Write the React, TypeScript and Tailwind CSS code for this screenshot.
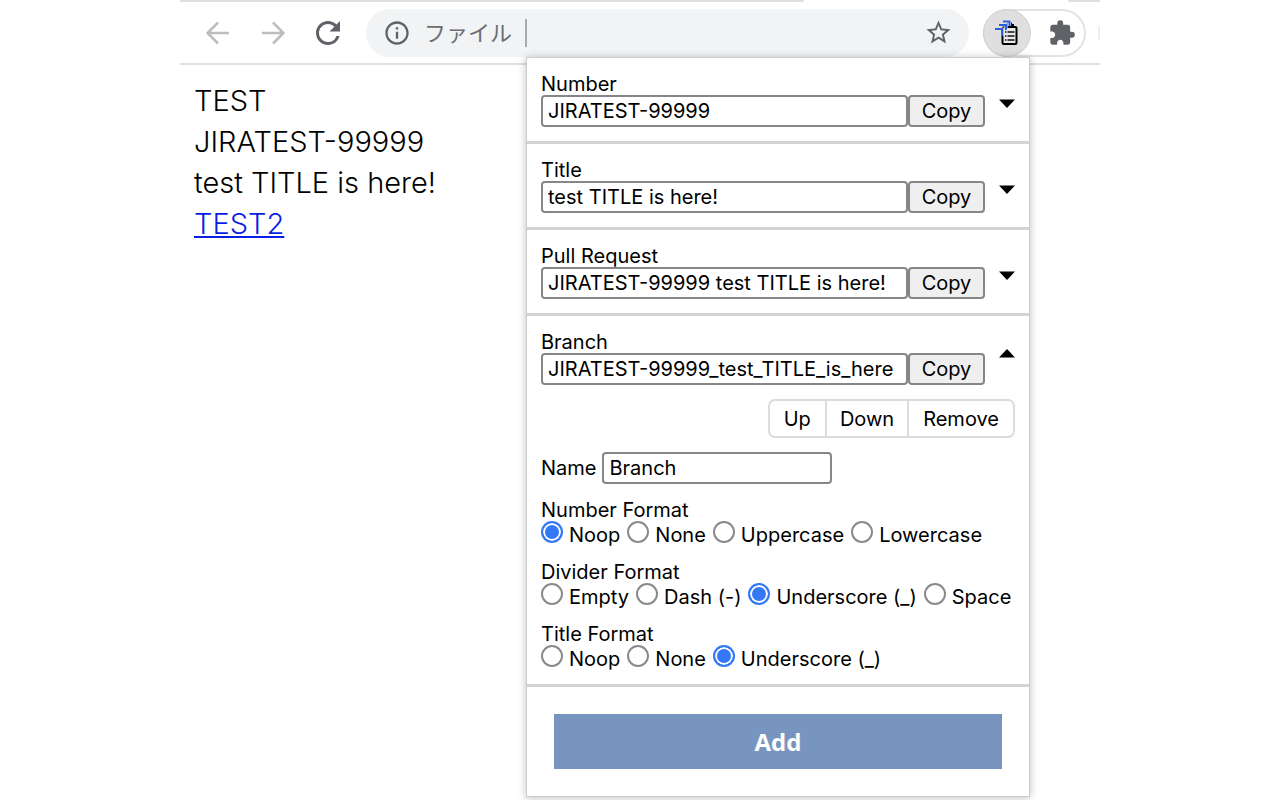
import { useState } from "react";
import { MdExtension, MdInfoOutline, MdRefresh, MdStarBorder } from "react-icons/md";

const fieldClass =
  "h-8 rounded-[4px] border-2 border-[#868686] bg-white px-[5px] text-xl text-black outline-none";

function Arrow({ up }: { up: boolean }) {
  return (
    <svg width="16" height="18" viewBox="0 0 16 18" aria-hidden="true">
      <path d={up ? "M0 8.500h16L8 0z" : "M0 8.500h16L8 17z"} fill="#000" />
    </svg>
  );
}

function FormatRow({ id, label, value }: { id: string; label: string; value: string }) {
  const [open, setOpen] = useState(id === "branch");
  return (
    <div className="flex items-center gap-[14px]">
      <div className="min-w-0 flex-1">
        <label htmlFor={id} className="block pt-[2px] leading-[21px]">
          {label}
        </label>
        <div className="flex">
          <input id={id} type="text" defaultValue={value} className={`${fieldClass} min-w-0 flex-1`} />
          <button type="button" className="h-8 w-[77px] rounded-[4px] border-2 border-[#868686] bg-[#efefef]">
            Copy
          </button>
        </div>
      </div>
      <button type="button" aria-label={`Toggle ${label}`} onClick={() => setOpen(!open)}>
        <Arrow up={open} />
      </button>
    </div>
  );
}

function RadioGroup({ name, legend, options, selected }: { name: string; legend: string; options: string[]; selected: string }) {
  return (
    <fieldset className="mt-[14px]">
      <legend className="pt-[2px] leading-[21px]">{legend}</legend>
      <div className="flex gap-[7px] whitespace-nowrap">
        {options.map((option) => (
          <label key={option} className="flex items-start gap-[6px]">
            <input
              type="radio"
              name={name}
              defaultChecked={option === selected}
              className="size-[22px] shrink-0 appearance-none rounded-full border-2 border-[#8a8a8a] bg-white checked:border-[#3478f6] checked:bg-[#3478f6] checked:shadow-[inset_0_0_0_2px_#fff]"
            />
            <span className="pt-1 leading-[21px]">{option}</span>
          </label>
        ))}
      </div>
    </fieldset>
  );
}

function Popup() {
  const sectionClass = "border-b-[3px] border-[#d3d3d3] p-[14px]";
  return (
    <div className="absolute top-[58px] right-[71px] w-[502px] bg-white font-['Inter',sans-serif] text-xl text-black shadow-[0_0_0_1px_#cccccc,0_1px_8px_1px_rgba(0,0,0,0.25)]">
      <section className={sectionClass}>
        <FormatRow id="number" label="Number" value="JIRATEST-99999" />
      </section>
      <section className={sectionClass}>
        <FormatRow id="title" label="Title" value="test TITLE is here!" />
      </section>
      <section className={sectionClass}>
        <FormatRow id="pull-request" label="Pull Request" value="JIRATEST-99999 test TITLE is here!" />
      </section>
      <section className={sectionClass}>
        <FormatRow id="branch" label="Branch" value="JIRATEST-99999_test_TITLE_is_here" />
        <div className="mt-[14px] flex justify-end">
          <div className="flex h-[39px] divide-x-2 divide-[#dcdcdc] rounded-[7px] border-2 border-[#dcdcdc]">
            <button type="button" className="px-[14px]">Up</button>
            <button type="button" className="px-[13px]">Down</button>
            <button type="button" className="px-[14px]">Remove</button>
          </div>
        </div>
        <div className="mt-[14px] flex items-center gap-[6px]">
          <label htmlFor="format-name">Name</label>
          <input id="format-name" type="text" defaultValue="Branch" className={`${fieldClass} w-[230px]`} />
        </div>
        <RadioGroup name="number-format" legend="Number Format" options={["Noop", "None", "Uppercase", "Lowercase"]} selected="Noop" />
        <RadioGroup name="divider-format" legend="Divider Format" options={["Empty", "Dash (-)", "Underscore (_)", "Space"]} selected="Underscore (_)" />
        <RadioGroup name="title-format" legend="Title Format" options={["Noop", "None", "Underscore (_)"]} selected="Underscore (_)" />
      </section>
      <div className="p-[27px]">
        <button type="button" className="h-[55px] w-full bg-[#7895bf] font-['Open_Sans',sans-serif] text-2xl font-bold text-white">
          Add
        </button>
      </div>
    </div>
  );
}

function ClipboardIcon() {
  return (
    <svg width="24" height="26" viewBox="0 0 24 26" fill="none" aria-hidden="true">
      <rect x="7.500" y="7" width="14" height="17" rx="1.200" fill="#e8e8e8" stroke="#000" strokeWidth="2" />
      <path d="M10.500 6.500V4h2V2.500h4.500V4h2v2.500z" fill="#000" />
      <path d="M10 12h1.500M12.500 12h7M10 16h1.500M12.500 16h7M10 20h1.500M12.500 20h7" stroke="#111" strokeWidth="1.600" />
      <path d="M8 1.500h6.500V6M4 5h7v5M0 9h7v7" stroke="#e8e8e8" strokeWidth="3.200" />
      <path d="M8 1.500h6.500V6M4 5h7v5M0 9h7v7" stroke="#2b5fd9" strokeWidth="2" />
    </svg>
  );
}

function Toolbar() {
  return (
    <header className="border-b-2 border-[#dedee3] bg-white">
      <div className="flex h-[2px] justify-between">
        <div className="w-[624px] rounded-br-sm bg-[#dedee3]" />
        <div className="w-8 rounded-bl-sm bg-[#dedee3]" />
      </div>
      <div className="flex h-[61px] items-center">
        <button type="button" aria-label="Back" className="ml-[26px]">
          <svg width="24" height="24" viewBox="0 0 24 24" fill="none" stroke="#bcbdbf" strokeWidth="2.500">
            <path d="M23 12H2M12 1.500L1.500 12 12 22.500" />
          </svg>
        </button>
        <button type="button" aria-label="Forward" className="ml-[31px]">
          <svg width="24" height="24" viewBox="0 0 24 24" fill="none" stroke="#bcbdbf" strokeWidth="2.500">
            <path d="M1 12h21M12 1.500L22.500 12 12 22.500" />
          </svg>
        </button>
        <button type="button" aria-label="Reload" className="ml-[25px]">
          <MdRefresh size={36} color="#5f6368" />
        </button>
        <div className="ml-5 flex h-12 min-w-0 flex-1 items-center rounded-full bg-[#f1f3f4] pr-4 pl-[17px] text-[#6b6e72]">
          <MdInfoOutline size={28} color="#5f6368" />
          <span className="ml-[13px] pb-[3px] font-['Noto_Sans_CJK_JP',sans-serif] text-[22px] leading-8">ファイル</span>
          <span className="ml-[13px] h-7 w-[2px] bg-[#a9abae]" />
          <button type="button" aria-label="Bookmark" className="ml-auto">
            <MdStarBorder size={29} color="#5f6368" />
          </button>
        </div>
        <div className="mr-3 ml-[14px] flex h-12 w-[103px] items-center rounded-full border-2 border-[#e1e2e4]">
          <button type="button" aria-label="Ticket copy extension" className="-ml-[2px] flex size-12 shrink-0 items-center justify-center rounded-full border border-[#d0d0d0] bg-[#dfdfdf]">
            <ClipboardIcon />
          </button>
          <button type="button" aria-label="Extensions" className="ml-[17px]">
            <MdExtension size={28} color="#5f6368" />
          </button>
        </div>
        <div className="h-4 w-[2px] rounded-l-sm bg-[#f0f0e8]" />
      </div>
    </header>
  );
}

export default function App() {
  return (
    <div className="min-h-screen bg-white">
      <div className="relative mx-auto min-h-screen max-w-[920px] overflow-hidden">
        <Toolbar />
        <main className="px-[14px] pt-[15px] font-['Inter',sans-serif] text-[29px] leading-[41px] font-light text-black">
          <p>TEST</p>
          <p>JIRATEST-99999</p>
          <p>test TITLE is here!</p>
          <a href="#test2" className="text-[#0a1ee6] underline">TEST2</a>
        </main>
        <Popup />
      </div>
    </div>
  );
}
